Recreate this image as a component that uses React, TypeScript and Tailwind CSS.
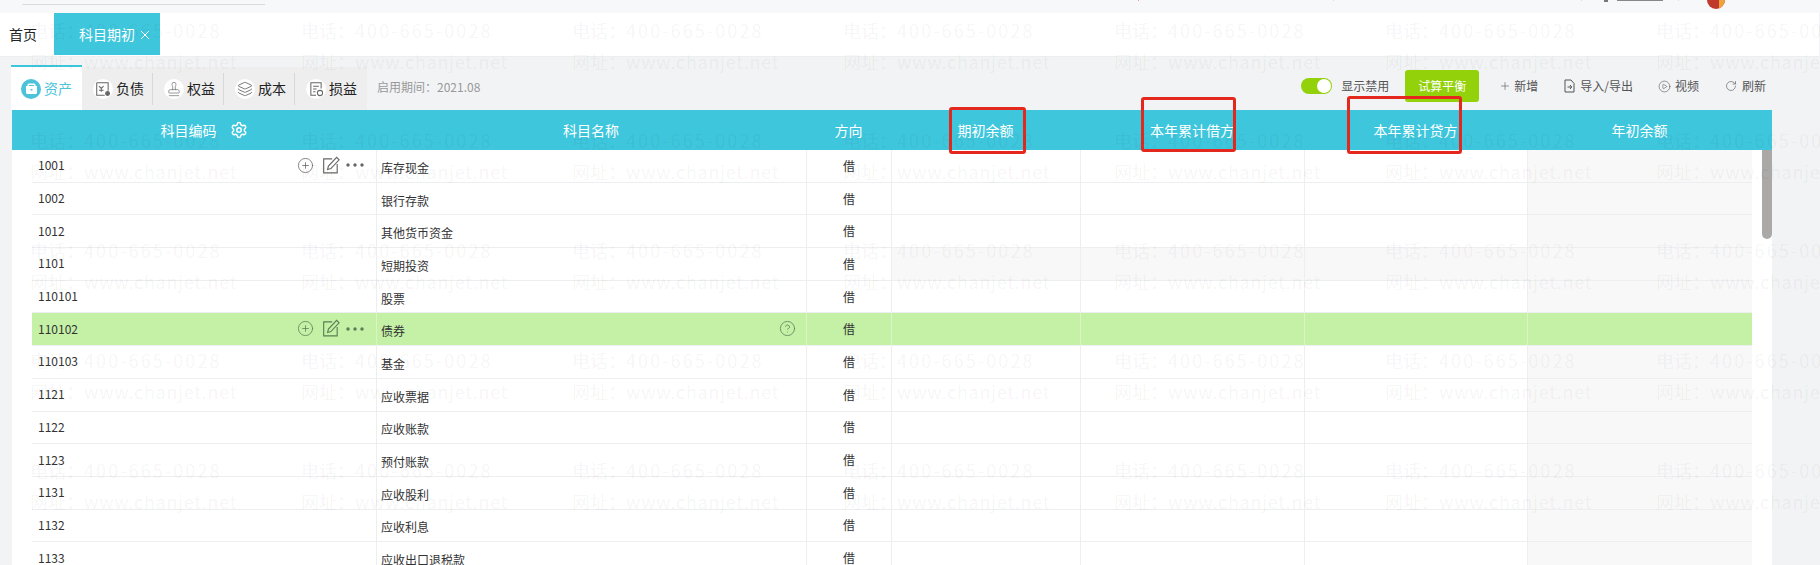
import React from "react";
import { Settings, CirclePlus, CircleHelp, CirclePlay, RotateCw, Plus, Layers, Stamp } from "lucide-react";

const rows = [
  ["1001", "库存现金"],
  ["1002", "银行存款"],
  ["1012", "其他货币资金"],
  ["1101", "短期投资"],
  ["110101", "股票"],
  ["110102", "债券"],
  ["110103", "基金"],
  ["1121", "应收票据"],
  ["1122", "应收账款"],
  ["1123", "预付账款"],
  ["1131", "应收股利"],
  ["1132", "应收利息"],
  ["1133", "应收出口退税款"],
];

const grid = "grid grid-cols-[344px_430px_85px_189px_224px_223px_225px]";

function EditIcon({ className }: { className?: string }) {
  return (
    <svg width="18" height="18" viewBox="0 0 16 16" fill="none" stroke="currentColor" strokeWidth="1" className={className}>
      <path d="M9 2.5H1.5V15H13.5V7" />
      <path d="M5 12l.7-3L13 1.2l2.2 2.2L7.9 11.2z" />
    </svg>
  );
}

function Dots({ className }: { className?: string }) {
  return (
    <svg width="18" height="4" viewBox="0 0 18 4" fill="currentColor" className={className}>
      <circle cx="2" cy="2" r="1.7" />
      <circle cx="9" cy="2" r="1.7" />
      <circle cx="16" cy="2" r="1.7" />
    </svg>
  );
}

function RowTools({ tone }: { tone: string }) {
  return (
    <div className={`flex items-center ${tone}`}>
      <CirclePlus size={17} strokeWidth={1.1} />
      <EditIcon className="ml-[8px] mb-[1px]" />
      <Dots className="ml-[6px]" />
    </div>
  );
}

function Row({ code, name, index }: { code: string; name: string; index: number }) {
  const green = code === "110102";
  const tools = code === "1001" || green;
  const grayRow = code === "1101";
  const line = green ? "border-[#d9f5c6]" : "border-[#eceef0]";
  const money = grayRow ? "bg-[#f8f8f8]" : "";
  return (
    <div
      data-row={index}
      className={`${grid} h-[32.7px] border-b ${green ? "bg-[#c4f1a6] border-[#eef0f0]" : "border-[#eceef0]"} text-[12px] text-[#333]`}
    >
      <div className="flex items-center justify-between pl-[6px] pr-[12px] pb-[1px]">
        <span>{code}</span>
        {tools && <RowTools tone={green ? "text-[#5c7c56]" : "text-[#666]"} />}
      </div>
      <div className={`flex items-center justify-between border-l ${line} pl-[4px] pr-[10px]`}>
        <span className="pt-[4px]">{name}</span>
        {green && <CircleHelp size={17} strokeWidth={1.1} className="mb-[2px] text-[#5c7c56]" />}
      </div>
      <div className={`flex items-center justify-center border-l ${line}`}>借</div>
      <div className={`border-l ${line} ${money}`} />
      <div className={`border-l ${line} ${money}`} />
      <div className={`border-l ${line} ${money}`} />
      <div className={`border-l ${line} ${green ? "" : "bg-[#f8f8f9]"}`} />
    </div>
  );
}

function TabCircle({ children }: { children: React.ReactNode }) {
  return (
    <span className="flex h-[20px] w-[20px] items-center justify-center rounded-full bg-white text-[#666]">
      {children}
    </span>
  );
}

function Tab({ label, icon, last }: { label: string; icon: React.ReactNode; last?: boolean }) {
  return (
    <div className="flex h-[43px] w-[71px] items-center pl-[11px] text-[14px] text-[#222]">
      <TabCircle>{icon}</TabCircle>
      <span className="ml-[3px]">{label}</span>
      {!last && <span className="ml-auto h-[32px] w-px bg-[#d8d8d8]" />}
    </div>
  );
}

function Mark() {
  return (
    <div className="whitespace-nowrap text-[18px] leading-[31px] text-[#000]/[0.055]">
      <div>
        电话：<span className="tracking-[2.1px]">400-665-0028</span>
      </div>
      <div>
        网址：<span className="tracking-[0.7px]">www.chanjet.net</span>
      </div>
    </div>
  );
}

export default function App() {
  return (
    <div className="relative h-[565px] w-full overflow-hidden bg-[#f2f3f5] font-['Noto_Sans_CJK_SC','Noto_Sans',sans-serif]">
      {/* top strip */}
      <div className="flex h-[13px] items-start bg-[#f7f8fa]">
        <div className="ml-[22px] mt-[4px] h-px w-[243px] bg-[#d9dbe0]" />
        <div className="ml-[873px] h-px w-px bg-[#e8a09a]" />
        <div className="ml-[194px] h-px w-px bg-[#ddd]" />
        <div className="ml-[247px] h-px w-px bg-[#ddd]" />
        <div className="ml-[22px] h-[2px] w-[4px] bg-[#777]" />
        <div className="ml-[9px] h-px w-[46px] bg-[#888]" />
        <div className="ml-[15px] h-px w-px bg-[#ddd]" />
        <div className="ml-[28px] flex h-[9px] w-[18px] overflow-hidden rounded-b-full bg-[#c0392b]">
          <span className="ml-auto h-full w-[6px] bg-[#f0a23c]" />
        </div>
      </div>

      {/* page tabs */}
      <div className="flex h-[44px] w-[1819px] items-start border-b border-[#eceef0] bg-white">
        <span className="ml-[9px] mt-[11px] text-[14px] leading-[20px] text-[#222]">首页</span>
        <div className="ml-[17px] flex h-[42px] w-[106px] items-center bg-[#3ec6dc] pl-[25px] text-[14px] text-white">
          <span>科目期初</span>
          <svg width="10" height="10" viewBox="0 0 10 10" stroke="currentColor" strokeWidth="1" className="ml-[5px] mt-[2px]">
            <path d="M1 1l8 8M9 1l-8 8" />
          </svg>
        </div>
      </div>

      {/* toolbar */}
      <div className="flex h-[53px] items-start justify-between pl-[11px] pr-[54px] pt-[8px]">
        <div className="flex items-start">
          <div className="flex h-[45px] w-[71px] items-center border-t-2 border-[#3ec6dc] bg-white pl-[10px] text-[14px] text-[#4cc3d9]">
            <span className="flex h-[20px] w-[20px] items-center justify-center rounded-full bg-[#4cc3d9] text-white">
              <svg width="13" height="13" viewBox="0 0 13 13" fill="currentColor">
                <path d="M4 1.5h5a1.5 1.5 0 0 1 1.5 1.5v1H12v6.5A1.5 1.5 0 0 1 10.5 12h-8A1.5 1.5 0 0 1 1 10.5V4h1.5V3A1.5 1.5 0 0 1 4 1.5zM4 4h5V3H4z" fillRule="evenodd" />
                <path d="M5.5 7h2v1.5h-2z" fill="#4cc3d9" />
              </svg>
            </span>
            <span className="ml-[3px]">资产</span>
          </div>
          <div className="mt-[2px] flex bg-[#eeeeef] pr-[1px]">
            <Tab
              label="负债"
              icon={
                <svg width="16" height="16" viewBox="0 0 14 14" fill="none" stroke="currentColor" strokeWidth="0.9">
                  <path d="M1.5 1.5h10v7M1.5 1.5v11h7" />
                  <path d="M3.5 4.5l2 2 2-2M5.5 6.5v3M3.5 8h4" />
                  <circle cx="11" cy="11" r="1.7" fill="currentColor" />
                </svg>
              }
            />
            <Tab label="权益" icon={<Stamp size={16} strokeWidth={1} />} />
            <Tab label="成本" icon={<Layers size={16} strokeWidth={1.3} />} />
            <Tab
              last
              label="损益"
              icon={
                <svg width="16" height="16" viewBox="0 0 14 14" fill="none" stroke="currentColor" strokeWidth="0.9">
                  <path d="M7 12.5H2.5v-11h9v5" />
                  <path d="M4.5 4.5h5M4.5 7h3M4.5 9.5h2" />
                  <circle cx="10.5" cy="10.5" r="2.3" />
                </svg>
              }
            />
          </div>
          <span className="ml-[10px] mt-[12px] text-[12px] leading-[20px] text-[#999]">启用期间：2021.08</span>
        </div>

        <div className="mt-[5px] flex h-[32px] items-center text-[12px] text-[#555]">
          <div className="flex h-[16px] w-[31px] items-center justify-end rounded-full bg-[#93d10a] pr-px">
            <span className="h-[14px] w-[14px] rounded-full bg-white" />
          </div>
          <span className="ml-[9px]">显示禁用</span>
          <div className="ml-[16px] flex h-[32px] w-[74px] items-center justify-center rounded-[3px] bg-[#93d10a] text-white">
            试算平衡
          </div>
          <Plus size={12} strokeWidth={1.2} className="ml-[20px]" />
          <span className="ml-[3px]">新增</span>
          <svg width="11" height="14" viewBox="0 0 11 14" fill="none" stroke="currentColor" strokeWidth="1" className="ml-[26px]">
            <path d="M7 1H1v12h9V4.5L7 1z" />
            <path d="M3.5 8h4M6 6l1.7 2L6 10" />
          </svg>
          <span className="ml-[5px]">导入/导出</span>
          <CirclePlay size={13} strokeWidth={1.1} className="ml-[25px]" />
          <span className="ml-[4px]">视频</span>
          <RotateCw size={12} strokeWidth={1.2} className="ml-[26px]" />
          <span className="ml-[5px]">刷新</span>
        </div>
      </div>

      {/* table */}
      <div className="ml-[12px] w-[1760px]">
        <div className={`${grid} h-[40px] items-center bg-[#3ec6dc] px-[20px] text-center text-[14px] text-white`}>
          <div className="flex items-center justify-center">
            <span>科目编码</span>
            <Settings size={18} strokeWidth={2} className="ml-[13px]" />
          </div>
          <div>科目名称</div>
          <div>方向</div>
          <div>期初余额</div>
          <div>本年累计借方</div>
          <div>本年累计贷方</div>
          <div>年初余额</div>
        </div>
        <div className="flex bg-white pl-[20px]">
          <div className="w-[1720px]">
            {rows.map((r, i) => (
              <Row key={r[0]} code={r[0]} name={r[1]} index={i} />
            ))}
          </div>
          <div className="w-[20px] pl-[10px]">
            <div className="h-[89px] w-[10px] rounded-b-[5px] bg-[#aaa9a8]" />
          </div>
        </div>
      </div>

      {/* red annotation boxes */}
      <div className="pointer-events-none absolute left-[949px] top-[107px] h-[47px] w-[77px] rounded-[3px] border-[3px] border-[#e5281e]" />
      <div className="pointer-events-none absolute left-[1141px] top-[97px] h-[55px] w-[95px] rounded-[3px] border-[3px] border-[#e5281e]" />
      <div className="pointer-events-none absolute left-[1347px] top-[96px] h-[58px] w-[115px] rounded-[3px] border-[3px] border-[#e5281e]" />

      {/* watermark */}
      <div className="pointer-events-none absolute inset-0 grid auto-rows-[110px] grid-cols-[repeat(7,271px)] pl-[30px] pt-[15px]">
        {Array.from({ length: 35 }).map((_, i) => (
          <Mark key={i} />
        ))}
      </div>
    </div>
  );
}
